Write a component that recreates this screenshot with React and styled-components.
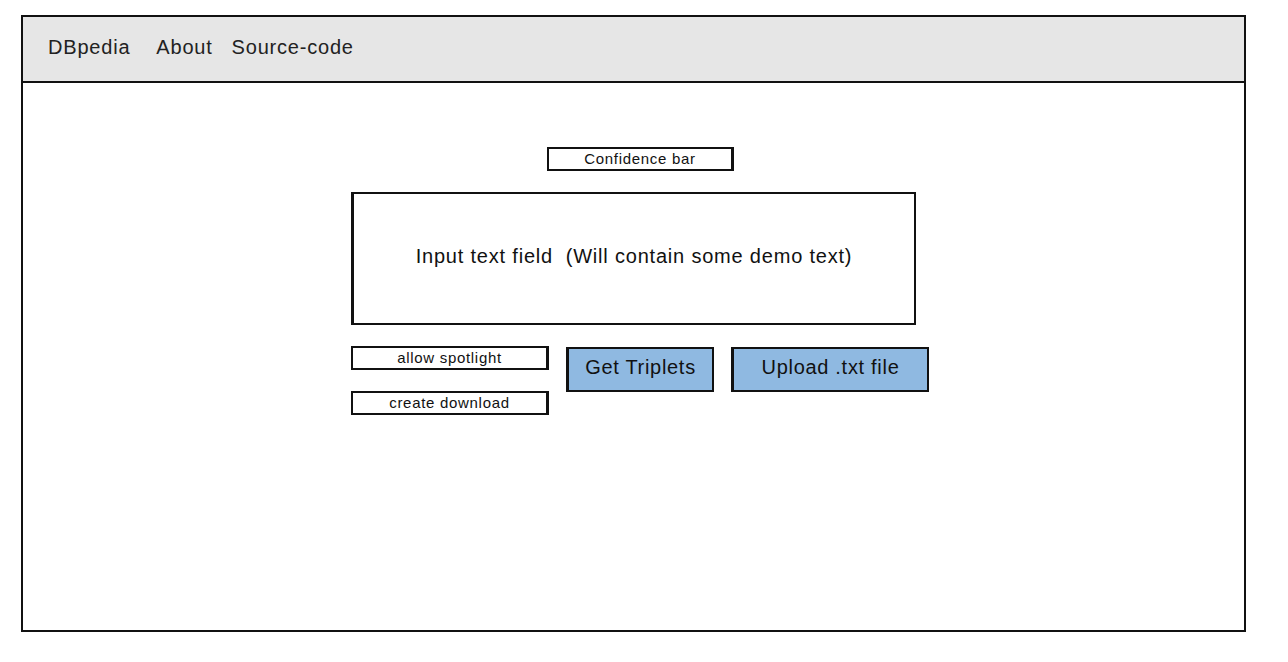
import styled, { createGlobalStyle } from 'styled-components';

const Global = createGlobalStyle`
  body {
    margin: 0;
    background: #fff;
    font-family: 'Liberation Sans', Arial, sans-serif;
    color: #111;
  }
`;

const Frame = styled.div`
  margin: 15px 0 0 21px;
  width: 1225px;
  height: 617px;
  box-sizing: border-box;
  border: 2px solid #111;
  display: flex;
  flex-direction: column;
`;

const NavBar = styled.nav`
  height: 66px;
  box-sizing: border-box;
  background: #e6e6e6;
  border-bottom: 2px solid #111;
  display: flex;
  align-items: center;
  padding: 0 0 4px 25px;
  font-size: 20px;
  letter-spacing: 0.8px;
  color: #222;
`;

const NavLink = styled.span`
  margin-right: ${(p) => p.$gap || 0}px;
`;

const Main = styled.main`
  display: flex;
  justify-content: center;
  padding-top: 64px;
`;

const Column = styled.div`
  width: 565px;
  display: flex;
  flex-direction: column;
  gap: 21px;
`;

const SmallBox = styled.div`
  flex: none;
  width: ${(p) => p.$w}px;
  height: 24px;
  box-sizing: border-box;
  border: 2px solid #111;
  border-right-width: 3px;
  margin-left: ${(p) => p.$offset || 0}px;
  display: flex;
  align-items: center;
  justify-content: center;
  font-size: 15px;
  letter-spacing: 0.7px;
  padding-bottom: 2px;
  color: #111;
`;

const InputField = styled.div`
  height: 133px;
  box-sizing: border-box;
  border: 2px solid #111;
  border-left-width: 3px;
  display: flex;
  align-items: center;
  justify-content: center;
  font-size: 20px;
  letter-spacing: 0.8px;
  padding-bottom: 4px;
`;

const Controls = styled.div`
  display: flex;
  gap: 17px;
  align-items: flex-start;
`;

const Toggles = styled.div`
  flex: none;
  display: flex;
  flex-direction: column;
  gap: 21px;
`;

const ActionButton = styled.button`
  flex: none;
  width: ${(p) => p.$w}px;
  height: 45px;
  box-sizing: border-box;
  background: #8fb9e1;
  border: 2px solid #111;
  border-left-width: 3px;
  font-family: inherit;
  font-size: 20px;
  letter-spacing: 0.7px;
  color: #111;
  padding: 0 0 4px;
  margin-top: 1px;
`;

export default function App() {
  return (
    <>
      <Global />
      <Frame>
        <NavBar>
          <NavLink $gap={26}>DBpedia</NavLink>
          <NavLink $gap={19}>About</NavLink>
          <NavLink>Source-code</NavLink>
        </NavBar>
        <Main>
          <Column>
            <SmallBox $w={187} $offset={196}>Confidence bar</SmallBox>
            <InputField>Input text field&nbsp; (Will contain some demo text)</InputField>
            <Controls>
              <Toggles>
                <SmallBox $w={198}>allow spotlight</SmallBox>
                <SmallBox $w={198}>create download</SmallBox>
              </Toggles>
              <ActionButton $w={148}>Get Triplets</ActionButton>
              <ActionButton $w={198}>Upload .txt file</ActionButton>
            </Controls>
          </Column>
        </Main>
      </Frame>
    </>
  );
}
